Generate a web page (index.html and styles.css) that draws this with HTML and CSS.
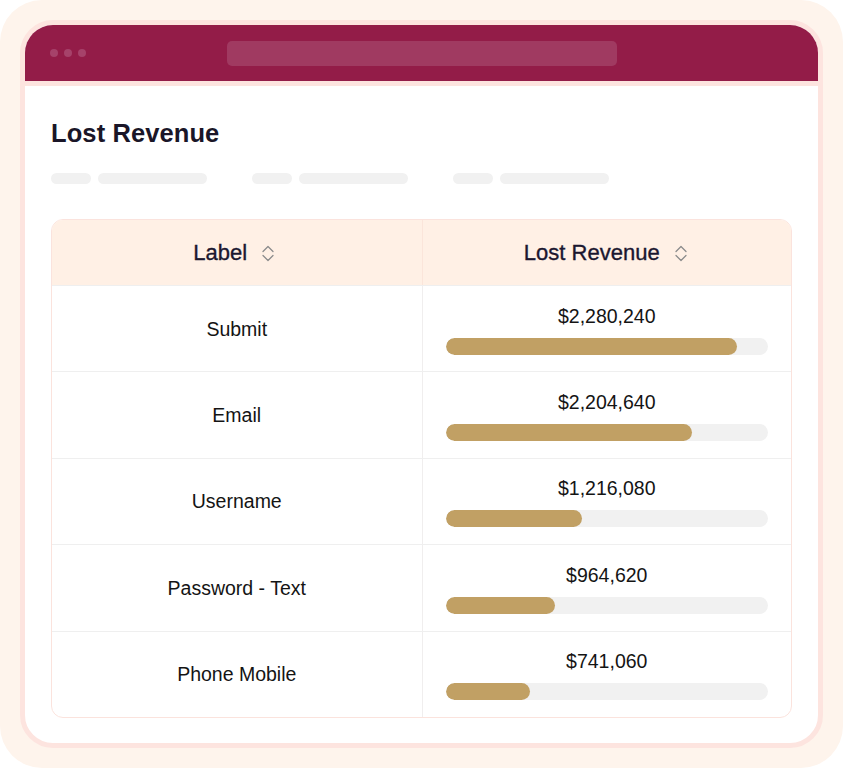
FILE: index.html
```html
<!DOCTYPE html>
<html lang="en">
<head>
<meta charset="utf-8">
<title>Lost Revenue</title>
<link rel="stylesheet" href="styles.css">
</head>
<body>
<div class="frame">
  <div class="window">
    <div class="titlebar">
      <div class="dots"><span class="dot"></span><span class="dot"></span><span class="dot"></span></div>
      <div class="urlbar"></div>
      <div></div>
    </div>
    <div class="content">
      <h1 class="title">Lost Revenue</h1>
      <div class="skeleton">
        <div class="sk-group"><span class="pill short"></span><span class="pill long"></span></div>
        <div class="sk-group"><span class="pill short"></span><span class="pill long"></span></div>
        <div class="sk-group"><span class="pill short"></span><span class="pill long"></span></div>
      </div>
      <div class="table">
        <div class="row head">
          <div class="cell">
            <span class="th">Label</span>
            <svg class="sort" width="12" height="17" viewBox="0 0 12 17"><path d="M1 6.5 L6 1.5 L11 6.5" fill="none" stroke="#8c8c8c" stroke-width="1.3" stroke-linecap="round" stroke-linejoin="round"/><path d="M1 10.5 L6 15.5 L11 10.5" fill="none" stroke="#8c8c8c" stroke-width="1.3" stroke-linecap="round" stroke-linejoin="round"/></svg>
          </div>
          <div class="cell">
            <span class="th">Lost Revenue</span>
            <svg class="sort" width="12" height="17" viewBox="0 0 12 17"><path d="M1 6.5 L6 1.5 L11 6.5" fill="none" stroke="#8c8c8c" stroke-width="1.3" stroke-linecap="round" stroke-linejoin="round"/><path d="M1 10.5 L6 15.5 L11 10.5" fill="none" stroke="#8c8c8c" stroke-width="1.3" stroke-linecap="round" stroke-linejoin="round"/></svg>
          </div>
        </div>
        <div class="row">
          <div class="cell label">Submit</div>
          <div class="cell value"><span class="amount">$2,280,240</span><div class="track"><div class="fill" style="width:90.5%"></div></div></div>
        </div>
        <div class="row">
          <div class="cell label">Email</div>
          <div class="cell value"><span class="amount">$2,204,640</span><div class="track"><div class="fill" style="width:76.3%"></div></div></div>
        </div>
        <div class="row">
          <div class="cell label">Username</div>
          <div class="cell value"><span class="amount">$1,216,080</span><div class="track"><div class="fill" style="width:42.2%"></div></div></div>
        </div>
        <div class="row">
          <div class="cell label">Password - Text</div>
          <div class="cell value"><span class="amount">$964,620</span><div class="track"><div class="fill" style="width:34.1%"></div></div></div>
        </div>
        <div class="row">
          <div class="cell label">Phone Mobile</div>
          <div class="cell value"><span class="amount">$741,060</span><div class="track"><div class="fill" style="width:26.3%"></div></div></div>
        </div>
      </div>
    </div>
  </div>
</div>
</body>
</html>
```
FILE: styles.css
```css
* { box-sizing: border-box; }
html, body { margin: 0; padding: 0; background: #ffffff; }
body { font-family: "Liberation Sans", Arial, sans-serif; color: #141414; }

.frame {
  width: 843px;
  height: 768px;
  background: #fef4ec;
  border-radius: 42px;
  padding: 20px;
}

.window {
  width: 803px;
  height: 728px;
  border: 5px solid #fde4df;
  border-radius: 33px;
  background: #ffffff;
  overflow: hidden;
  display: flex;
  flex-direction: column;
}

.titlebar {
  height: 61px;
  flex: none;
  background: #931c48;
  border-bottom: 5px solid #fde4df;
  display: grid;
  grid-template-columns: 1fr 390px 1fr;
  align-items: center;
}
.dots { display: flex; gap: 6px; padding-left: 25px; }
.dot { width: 8px; height: 8px; border-radius: 50%; background: #a6426a; }
.urlbar {
  height: 25px;
  border-radius: 5px;
  background: #a03a61;
  margin-top: 1px;
}

.content {
  flex: 1;
  padding: 31px 26px 26px 26px;
  display: flex;
  flex-direction: column;
}

.title {
  margin: 0;
  font-size: 25.5px;
  line-height: 32px;
  font-weight: 700;
  color: #1a1628;
  letter-spacing: 0.1px;
}

.skeleton {
  margin-top: 24px;
  display: flex;
  gap: 44px;
}
.sk-group { display: flex; gap: 7px; width: 157px; }
.pill { height: 11px; border-radius: 6px; background: #f1f1f1; }
.pill.short { width: 40px; }
.pill.long { width: 109px; }

.table {
  margin-top: 35px;
  border: 1px solid #fbe3dd;
  border-radius: 12px;
  overflow: hidden;
  display: flex;
  flex-direction: column;
}

.row {
  display: grid;
  grid-template-columns: 1fr 1fr;
  height: 86.4px;
  border-top: 1px solid #efefef;
}
.row.head {
  height: 65px;
  border-top: none;
  background: #fff0e5;
}
.cell {
  display: flex;
  align-items: center;
  justify-content: center;
}
.cell + .cell { border-left: 1px solid #f0eeee; }
.row.head .cell + .cell { border-left-color: #fbe5da; }

.th {
  font-size: 22px;
  color: #1b1730;
  -webkit-text-stroke: 0.35px #1b1730;
}
.sort { margin-left: 15px; margin-top: 1px; }
.row.head .cell:first-child { padding-right: 6px; }
.row.head .cell:last-child { padding-right: 3px; }

.label {
  font-size: 19.5px;
  color: #141414;
  padding-top: 1px;
}

.value {
  flex-direction: column;
  align-items: stretch;
  padding: 2px 23px 0 23px;
  gap: 11px;
}
.amount {
  font-size: 19.5px;
  line-height: 22px;
  text-align: center;
  color: #141414;
}
.track {
  height: 17px;
  border-radius: 9px;
  background: #f1f1f1;
  overflow: hidden;
}
.fill {
  height: 100%;
  border-radius: 9px;
  background: #c1a064;
}
```
